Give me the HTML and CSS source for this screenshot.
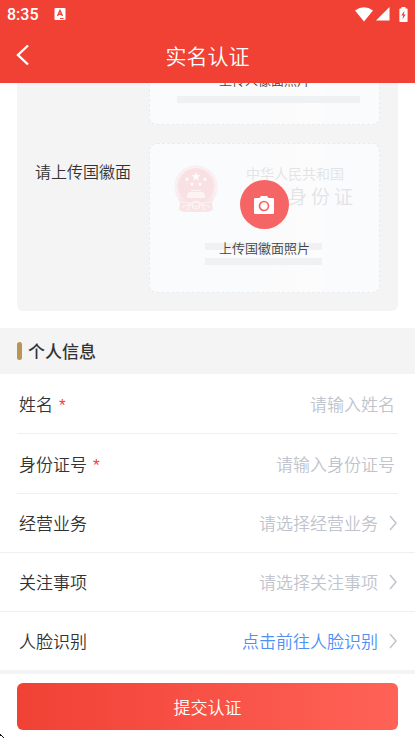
FILE: index.html
```html
<!DOCTYPE html>
<html lang="zh-CN">
<head>
<meta charset="utf-8">
<meta name="viewport" content="width=device-width, initial-scale=1">
<title>实名认证</title>
<link rel="stylesheet" href="styles.css">
</head>
<body>
<div class="app">
  <header class="top">
    <div class="status">
      <span class="clock">8:35</span>
      <svg class="badge" width="12" height="12" viewBox="0 0 12 12" aria-hidden="true"><rect x="0.5" width="11" height="12" rx="1" fill="#fff"/><path d="M3.500 8 6 2.500 8.500 8M4.400 6.300h3.200" fill="none" stroke="#f14135" stroke-width="1.400"/><path d="M6 10.500h3.500" stroke="#f14135" stroke-width="1"/></svg>
      <span class="signals">
        <svg width="18" height="15" viewBox="0 0 18 15" aria-hidden="true"><path d="M0 3.600Q9-3 18 3.600L9 14.500Z" fill="#fff"/></svg>
        <svg width="14" height="14" viewBox="0 0 14 14" aria-hidden="true"><path d="M13.500 0v13.500H0Z" fill="#fff"/></svg>
        <svg class="battery" width="9" height="15" viewBox="0 0 9 15" aria-hidden="true"><path d="M2.500 0h4v1.500H8q.6 0 .6.8v12q0 .7-.7.7H1.100q-.7 0-.7-.7v-12q0-.8.7-.8h1.400Z" fill="#fff"/><path d="M5.500 3.800 2.300 8.500h1.900l-.8 3.900 3.300-5H4.800Z" fill="#f14135"/></svg>
      </span>
    </div>
    <nav class="nav">
      <button class="back" type="button" aria-label="返回"><svg width="14" height="22" viewBox="0 0 14 22"><path d="M12 1.500 2 11l10 9.500" fill="none" stroke="#fff" stroke-width="2.400"/></svg></button>
      <h1>实名认证</h1>
    </nav>
  </header>

  <main class="content">
    <section class="uploads">
      <div class="upload">
        <button class="card" type="button">
          <span class="bar bar-long"></span>
          <span class="caption">上传人像面照片</span>
        </button>
      </div>
      <div class="upload">
        <span class="upload-label">请上传国徽面</span>
        <button class="card" type="button">
          <svg class="emblem" width="44" height="48" viewBox="0 0 44 48" aria-hidden="true">
            <circle cx="22" cy="22" r="21.500" fill="#f9e9eb"/>
            <circle cx="22" cy="22" r="20" fill="none" stroke="#fbf4f5" stroke-width="2" stroke-dasharray="2 1"/>
            <circle cx="22" cy="21" r="17.500" fill="#f8e0e3"/>
            <path d="m22 7 1.100 3.200h3.400l-2.700 2 1 3.300-2.800-2-2.800 2 1-3.300-2.700-2h3.400Z" fill="#fff"/>
            <g fill="#fff"><path id="s" d="m13 12 .6 1.500h1.600l-1.200 1 .4 1.600-1.400-.9-1.400.9.4-1.600-1.200-1h1.600Z"/><use href="#s" x="18"/><use href="#s" x="5" y="5"/><use href="#s" x="13" y="5"/></g>
            <path d="M15 27h14l2 3v3H13v-3ZM17 25h10v1H17Z" fill="#fcf3f4"/>
            <path d="M5 33q8 4 17 2 9 2 17-2l-1 6 1 6-5 2H10l-5-2 1-6Z" fill="#f9e3e5"/>
            <path d="M6 36q9 4 16 1 7 3 16-1M8 42q8-4 14 0 6-4 14 0M16 39l-3 7M28 39l3 7" fill="none" stroke="#fdf6f7" stroke-width="1"/>
            <circle cx="22" cy="40" r="4" fill="none" stroke="#fdf6f7" stroke-width="1"/>
          </svg>
          <span class="country">中华人民共和国</span>
          <span class="idname"><i>居</i><i>民</i><i>身</i><i>份</i><i>证</i></span>
          <span class="bar bar-one"></span>
          <span class="bar bar-two"></span>
          <span class="shot"><svg width="20" height="20" viewBox="0 0 20 20" aria-hidden="true"><path d="M7 1h6l1.500 2H19q1 0 1 1v14q0 1-1 1H1q-1 0-1-1V4q0-1 1-1h4.500Z" fill="#fff"/><circle cx="10" cy="11" r="4.500" fill="none" stroke="#f66565" stroke-width="1.700"/></svg></span>
          <span class="caption">上传国徽面照片</span>
        </button>
      </div>
    </section>

    <h2 class="heading">个人信息</h2>
    <form class="fields" id="identity">
      <div class="field inset"><label for="name">姓名<b>*</b></label><input id="name" type="text" placeholder="请输入姓名"></div>
      <div class="field inset"><label for="idno">身份证号<b>*</b></label><input id="idno" type="text" placeholder="请输入身份证号"></div>
      <div class="field"><label for="business">经营业务</label><button class="pick" id="business" type="button">请选择经营业务<svg width="8" height="16" viewBox="0 0 8 16"><path d="m1 1 6 7-6 7"/></svg></button></div>
      <div class="field"><label for="matters">关注事项</label><button class="pick" id="matters" type="button">请选择关注事项<svg width="8" height="16" viewBox="0 0 8 16"><path d="m1 1 6 7-6 7"/></svg></button></div>
      <div class="field last"><span>人脸识别</span><a class="pick link" href="#face">点击前往人脸识别<svg width="8" height="16" viewBox="0 0 8 16"><path d="m1 1 6 7-6 7"/></svg></a></div>
    </form>
  </main>

  <footer class="foot"><button class="submit" type="submit" form="identity">提交认证</button></footer>
  <svg class="pointer" width="5" height="5" viewBox="0 0 5 5" aria-hidden="true"><path d="M0 0h1v2H0ZM1 1h1v1H1ZM2 2h1v1H2ZM3 3h1v1H3Z" fill="#111"/></svg>
</div>
</body>
</html>
```
FILE: styles.css
```css
* { box-sizing: border-box; }
body {
  margin: 0;
  background: #fff;
  color: #333;
  font: 350 17px/24px "Noto Sans CJK SC", sans-serif;
}
button, input { margin: 0; padding: 0; border: 0; background: none; color: inherit; font: inherit; }
svg { display: block; flex: none; }
.app { position: relative; display: flex; flex-direction: column; height: 100vh; overflow: hidden; }

.top { flex: none; background: #f14135; color: #fff; }
.status { display: flex; align-items: center; height: 28px; padding: 0 7px; }
.clock { padding-top: 2px; font: 500 16px/26px Roboto, sans-serif; }
.badge { margin-left: 15px; }
.signals { display: flex; align-items: center; gap: 3px; margin-left: auto; }
.battery { margin-left: 6px; }
.nav { display: grid; grid-template-columns: 48px 1fr 48px; height: 55px; }
.back { padding-left: 16px; height: 54px; }
.nav h1 { margin: 0; text-align: center; font-size: 21px; line-height: 54px; font-weight: 350; }

.content { flex: 1; min-height: 0; display: flex; flex-direction: column; justify-content: flex-end; overflow: hidden; }
.uploads {
  flex: none;
  display: flex;
  flex-direction: column;
  gap: 18px;
  margin: 0 17px 17px;
  padding: 18px;
  background: #f4f4f4;
  border-radius: 6px;
}
.upload { display: grid; grid-template-columns: 96px 1fr; column-gap: 18px; }
.upload-label { padding-top: 16px; font-size: 16px; }
.card {
  position: relative;
  grid-column: 2;
  height: 150px;
  border: 1px dashed #e9ebee;
  border-radius: 8px;
  background: linear-gradient(90deg, #fafbfd 25%, #f9fbfd 40%, #fcfbfc 58%, #fcfcfd 75%, #fafbfd 76%);
}
.emblem { position: absolute; left: 24px; top: 21px; }
.country { position: absolute; left: 96px; top: 17px; color: #e2e3e6; font-size: 14px; white-space: nowrap; }
.idname { position: absolute; right: 26px; top: 40px; display: flex; gap: 4px; color: #e2e3e6; font-size: 19px; }
.idname i { font-style: normal; }
.bar { position: absolute; height: 7px; background: #f0f1f3; }
.bar-long { left: 27px; right: 19px; bottom: 21px; }
.bar-one { left: 55px; right: 57px; top: 99px; }
.bar-two { left: 55px; right: 57px; top: 114px; }
.shot {
  position: absolute;
  left: calc(50% - 25px);
  top: 36px;
  display: grid;
  place-items: center;
  width: 49px;
  height: 49px;
  border-radius: 50%;
  background: #f66565;
}
.caption { position: absolute; left: 0; right: 0; top: 92px; font-size: 13px; color: #444; text-align: center; }

.heading {
  flex: none;
  display: flex;
  align-items: center;
  gap: 6px;
  height: 46px;
  margin: 0;
  padding: 0 17px;
  background: #f4f4f4;
  font-size: 17px;
  font-weight: 500;
}
.heading::before { content: ""; width: 5px; height: 18px; border-radius: 3px; background: #b89552; }

.fields { flex: none; border-bottom: 4px solid #f4f4f4; }
.field {
  display: flex;
  align-items: center;
  justify-content: space-between;
  height: 59px;
  padding: 0 18px 0 19px;
  border-bottom: 1px solid #efefef;
}
.inset { height: 60px; margin: 0 17px; padding: 0 3px 0 2px; }
.last { height: 58px; border: 0; }
.field label { display: flex; align-items: center; gap: 6px; }
.field label, .field span { flex: none; }
.field b { padding-top: 4px; color: #f14135; font: 400 17px/20px "Liberation Sans", sans-serif; }
.field input { flex: 1; min-width: 0; text-align: right; outline: 0; }
.field input::placeholder { color: #c0c4cc; opacity: 1; }
.pick { display: flex; align-items: center; gap: 11px; color: #c0c4cc; text-decoration: none; }
.pick path { fill: none; stroke: #c0c4cc; stroke-width: 1.5; }
.link { color: #5090f5; }

.foot { flex: none; padding: 9px 17px; }
.submit {
  display: block;
  width: 100%;
  height: 47px;
  border-radius: 6px;
  background: linear-gradient(90deg, #f14135, #ff6257);
  color: #fff;
}
.pointer { position: absolute; left: 0; bottom: 0; }
```
